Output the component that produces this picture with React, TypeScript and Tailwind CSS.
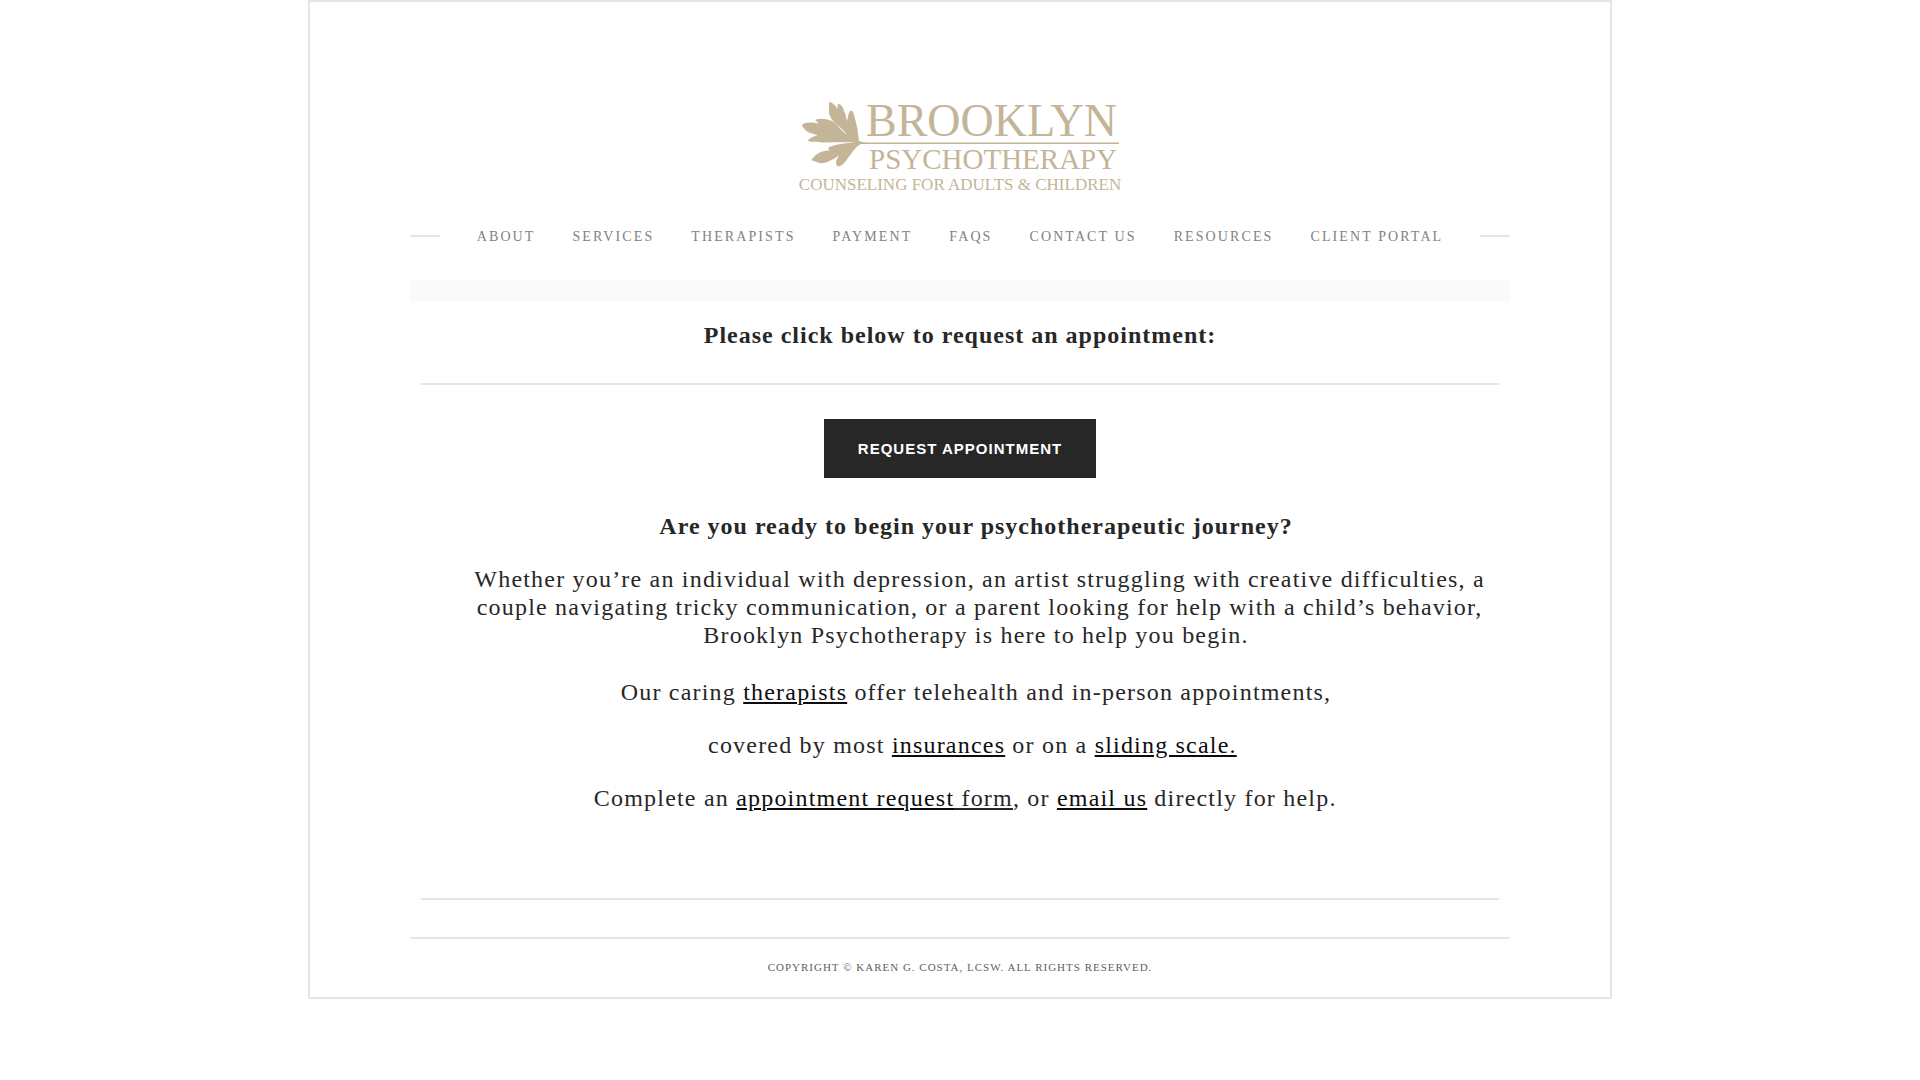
import React from 'react';

const navItems = [
  { label: 'About', href: '#about' },
  { label: 'Services', href: '#services' },
  { label: 'Therapists', href: '#therapists' },
  { label: 'Payment', href: '#payment' },
  { label: 'FAQs', href: '#faqs' },
  { label: 'Contact Us', href: '#contact' },
  { label: 'Resources', href: '#resources' },
  { label: 'Client Portal', href: '#portal' },
];

function Logo() {
  return (
    <svg
      width="336"
      height="106"
      viewBox="-8 0 336 106"
      fill="#c4b498"
      role="img"
      aria-label="Brooklyn Psychotherapy"
      className="font-['Liberation_Serif',serif]"
    >
      {/* Leaf and the stem that underlines the name */}
      <path d="M59 51 C58 42 57 35 55 29 C54 24 53 20 51 20.500 C49 21 48 26 47.200 31 C46 28 46 24 44 21 C43 17 41 14 38 14 C37 15 38 17 37.500 19 C35 15 33 13 30 12 C28 13 29.500 16 29 19 C29.500 21 28.500 24 30 26 C31 29 33 31 35 33 C39 37 43 39 47 45 C43 42 38 36 34 32.500 C29 29 22 28 16 29.500 C15 31 16 31 17.500 32 C17.500 33 18 33 19 34 C13 32 5 32 2 35 C2 37 4 37.500 5 40 C9 43 13 44 18 45 C14 46 10 48 7.500 50.500 C12 53 17 51.500 22 52.500 C32 52.500 43 52 55 52.500 C47 53 37 54 29 57 C28 58 28 59 30 60.500 C22 60 15 64 11.500 70 C13 72 17 71 19 73 C26 74 32 70 39 65.500 C37 69 34 73 38 76.500 C43 75.500 46 71 48 68 C52 63 55 57 61 54 L319 54 V52.500 L67 52.500 C63 52 61 52 59 51Z" />
      <text x="66" y="46" fontSize="46">BROOKLYN</text>
      <text x="69" y="79" fontSize="29">PSYCHOTHERAPY</text>
      <text x="160" y="100" fontSize="17" textAnchor="middle">COUNSELING FOR ADULTS &amp; CHILDREN</text>
    </svg>
  );
}

function Divider() {
  return <hr className="border-0 border-t-2 border-[#e5e5e5]" />;
}

function TextLink({ href, children }: { href: string; children: React.ReactNode }) {
  return (
    <a href={href} className="text-[#0d0d0d] underline">
      {children}
    </a>
  );
}

export default function App() {
  return (
    <div className="mx-auto max-w-[1304px] border-2 border-[#e5e5e5] bg-white px-[100px] pb-[21px] font-['Liberation_Serif',serif] text-[#272727]">
      <header className="pt-[88px]">
        <a href="#home" className="mx-auto block w-84">
          <Logo />
        </a>
        <nav className="mt-[27px] flex items-center gap-[37px]">
          <span className="h-0.5 flex-1 bg-[#e5e5e5]" />
          {navItems.map((item) => (
            <a
              key={item.href}
              href={item.href}
              className="pt-0.5 text-sm leading-6 tracking-[0.15em] whitespace-nowrap text-[#828282] uppercase"
            >
              {item.label}
            </a>
          ))}
          <span className="h-0.5 flex-1 bg-[#e5e5e5]" />
        </nav>
      </header>

      <div className="mt-[31px] h-[21px] bg-[#fafafa]" />

      <main className="px-[11px] text-center text-2xl leading-7">
        <h2 className="pt-5 pb-[34px] font-bold tracking-[1px]">Please click below to request an appointment:</h2>
        <Divider />
        <button
          type="button"
          className="mt-[34px] h-[59px] cursor-pointer bg-[#272727] px-[34px] font-['Liberation_Sans',sans-serif] text-[15px] font-bold tracking-[1px] text-white uppercase"
        >
          Request Appointment
        </button>

        <div className="mt-[34px] flex flex-col gap-[25px] pb-[86px] pl-8 tracking-wider">
          <h3 className="font-bold tracking-[1px]">Are you ready to begin your psychotherapeutic journey?</h3>
          <p>
            &nbsp;Whether you’re an individual with depression, an artist struggling with creative difficulties, a
            <br />
            &nbsp;couple navigating tricky communication, or a parent looking for help with a child’s behavior,
            <br />
            Brooklyn Psychotherapy is here to help you begin.
          </p>
          <p className="pt-1">
            Our caring <TextLink href="#therapists">therapists</TextLink> offer telehealth and in-person appointments,
          </p>
          <p>
            covered by most <TextLink href="#payment">insurances</TextLink> or on a{' '}
            <TextLink href="#payment">sliding scale.</TextLink>&nbsp;
          </p>
          <p>
            Complete an{' '}
            <TextLink href="#request">
              appointment request<span className="text-[#272727] underline"> form</span>
            </TextLink>
            , or <TextLink href="#email">email us</TextLink> directly for help.&nbsp;&nbsp;&nbsp;
          </p>
        </div>
        <Divider />
      </main>

      <footer className="mt-[37px]">
        <Divider />
        <p className="pt-[19px] text-center text-[11px] leading-[18px] tracking-[1px] text-[#5e5e5e] uppercase">
          Copyright © Karen G. Costa, LCSW. All rights reserved.
        </p>
      </footer>
    </div>
  );
}
